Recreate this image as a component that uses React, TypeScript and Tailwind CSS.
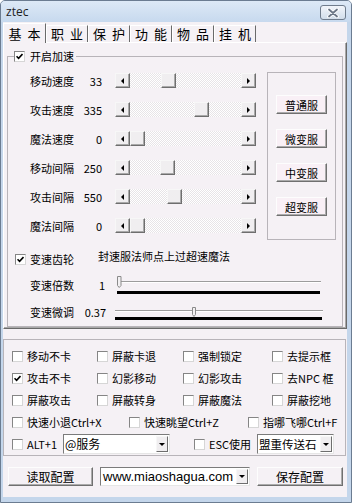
import React from "react";

const tabs = ["基本", "职业", "保护", "功能", "物品", "挂机"];

const speedRows = [
  { label: "移动速度", value: "33", thumb: "ml-[31px]" },
  { label: "攻击速度", value: "335", thumb: "ml-[64px]" },
  { label: "魔法速度", value: "0", thumb: "ml-0" },
  { label: "移动间隔", value: "250", thumb: "ml-[30px]" },
  { label: "攻击间隔", value: "550", thumb: "ml-[37px]" },
  { label: "魔法间隔", value: "0", thumb: "ml-0" },
];

const serverButtons = ["普通服", "微变服", "中变服", "超变服"];

const checkGrid: { label: string; on?: boolean }[][] = [
  [{ label: "移动不卡" }, { label: "屏蔽卡退" }, { label: "强制锁定" }, { label: "去提示框" }],
  [{ label: "攻击不卡", on: true }, { label: "幻影移动" }, { label: "幻影攻击" }, { label: "去NPC 框" }],
  [{ label: "屏蔽攻击" }, { label: "屏蔽转身" }, { label: "屏蔽魔法" }, { label: "屏蔽挖地" }],
];

function Check({ on }: { on?: boolean }) {
  return (
    <span className="flex h-[11px] w-[11px] shrink-0 items-center justify-center border border-[#858585] border-r-[#d6d6d6] border-b-[#d6d6d6] bg-white">
      {on && (
        <svg width="7" height="7" viewBox="0 0 7 7">
          <path d="M0.5 3.2 L2.6 5.4 L6.5 1" fill="none" stroke="#000" strokeWidth="1.6" />
        </svg>
      )}
    </span>
  );
}

function CheckItem({ label, on, className }: { label: string; on?: boolean; className?: string }) {
  return (
    <div className={"flex items-center gap-[4px] " + (className ?? "")}>
      <Check on={on} />
      <span className="whitespace-nowrap text-[11px] leading-[12px]">{label}</span>
    </div>
  );
}

function Arrow({ dir }: { dir: "left" | "right" | "down" }) {
  const d =
    dir === "left" ? "M4 0 L4 6 L1 3 Z" : dir === "right" ? "M1 0 L1 6 L4 3 Z" : "M0 1 L6 1 L3 4 Z";
  return (
    <svg width={dir === "down" ? 6 : 5} height={dir === "down" ? 5 : 6} viewBox={dir === "down" ? "0 0 6 5" : "0 0 5 6"}>
      <path d={d} fill="#000" />
    </svg>
  );
}

function ScrollBtn({ dir }: { dir: "left" | "right" }) {
  return (
    <div className="flex h-[15px] w-[15px] shrink-0 items-center justify-center border border-[#f7f7f7] border-r-[#6e6e6e] border-b-[#6e6e6e] bg-[#f0eef0] shadow-[inset_-1px_-1px_0_#a9a9a9]">
      <Arrow dir={dir} />
    </div>
  );
}

function HScroll({ thumb }: { thumb: string }) {
  return (
    <div className="flex h-[15px] w-[141px]">
      <ScrollBtn dir="left" />
      <div className="flex flex-1 bg-[repeating-conic-gradient(#ffffff_0%_25%,#e7e4e7_0%_50%)] bg-[length:2px_2px]">
        <div className={"h-[15px] w-[15px] border border-[#f7f7f7] border-r-[#6e6e6e] border-b-[#6e6e6e] bg-[#f0eef0] shadow-[inset_-1px_-1px_0_#a9a9a9] " + thumb} />
      </div>
      <ScrollBtn dir="right" />
    </div>
  );
}

function RaisedButton({ children, className }: { children: React.ReactNode; className?: string }) {
  return (
    <div
      className={
        "flex items-center justify-center border border-[#fdfdfd] border-r-[#707070] border-b-[#707070] shadow-[inset_-1px_-1px_0_#ababab] " +
        (className ?? "")
      }
    >
      {children}
    </div>
  );
}

function Select({ text, className, textClass }: { text: string; className: string; textClass: string }) {
  return (
    <div className={"flex items-center border border-[#7b7b7b] border-r-[#e6e6e6] border-b-[#e6e6e6] bg-white p-[1px] " + className}>
      <span className={"min-w-0 flex-1 whitespace-nowrap " + textClass}>{text}</span>
      <div className="flex h-full w-[12px] shrink-0 items-center justify-center border border-[#f7f7f7] border-r-[#6e6e6e] border-b-[#6e6e6e] bg-[#f0eef0]">
        <Arrow dir="down" />
      </div>
    </div>
  );
}

function Trackbar1() {
  return (
    <svg width="206" height="18" viewBox="0 0 206 18" className="shrink-0">
      <rect x="3" y="5" width="201" height="1" fill="#9c9c9c" />
      <rect x="3" y="6" width="201" height="1" fill="#ffffff" />
      <path d="M0.5 0.5 H4 V9.5 L2.2 11.5 L0.5 9.5 Z" fill="#f2f0f2" stroke="#8a8a8a" strokeWidth="1" />
      <rect x="0" y="15" width="203" height="3" fill="#000" />
    </svg>
  );
}

function Trackbar2() {
  return (
    <svg width="208" height="14" viewBox="0 0 208 14" className="shrink-0">
      <rect x="0" y="3" width="208" height="1" fill="#9c9c9c" />
      <rect x="0" y="4" width="208" height="1" fill="#ffffff" />
      <path d="M77.5 0.5 H80.5 V7.5 L79 9.5 L77.5 7.5 Z" fill="#f2f0f2" stroke="#8a8a8a" strokeWidth="1" />
      <rect x="0" y="10" width="207" height="3" fill="#000" />
    </svg>
  );
}

function CloseButton() {
  return (
    <div className="mr-[5px] mt-[4px] flex h-[15px] w-[26px] items-center justify-center rounded-[3px] border border-[#6f7c8c] bg-linear-to-b from-[#f1f5fa] to-[#d2deeb]">
      <svg width="12" height="10" viewBox="0 0 12 10">
        <path d="M2 1.5 L10 8.5 M10 1.5 L2 8.5" stroke="#ffffff" strokeWidth="3.6" strokeLinecap="round" />
        <path d="M2 1.5 L10 8.5 M10 1.5 L2 8.5" stroke="#6a7686" strokeWidth="1.8" strokeLinecap="round" />
      </svg>
    </div>
  );
}

export default function App() {
  return (
    <div className="flex h-[503px] w-[352px] flex-col overflow-hidden rounded-t-[5px] border border-[#6b7c91] bg-[#c4d6eb] font-['Noto_Sans_CJK_SC',sans-serif] text-black">
      {/* title bar */}
      <div className="flex h-[21px] shrink-0 items-start justify-between bg-linear-to-b from-[#dde9f6] to-[#c7d9ee]">
        <span className="ml-[5px] mt-[4px] font-['Open_Sans',sans-serif] text-[12px] leading-[14px] text-[#1e1e1e]">ztec</span>
        <CloseButton />
      </div>

      {/* client area */}
      <div className="mb-[5px] ml-[2px] mr-[4px] flex flex-1 flex-col bg-[#f5f1f5]">
        {/* tabs */}
        <div className="flex h-[20px] items-end">
          {tabs.map((t, i) =>
            i === 0 ? (
              <div
                key={t}
                className="relative z-10 -mb-px flex h-[20px] w-[43px] items-center justify-center gap-[6px] border border-b-0 border-[#ffffff] border-r-[#6a6a6a] bg-[#f5f1f5] text-[13px] leading-[14px]"
              >
                <span>{t[0]}</span>
                <span>{t[1]}</span>
              </div>
            ) : (
              <div
                key={t}
                className="flex h-[17px] w-[42px] items-center justify-center gap-[6px] border border-b-0 border-[#ffffff] border-r-[#6a6a6a] text-[13px] leading-[14px]"
              >
                <span>{t[0]}</span>
                <span>{t[1]}</span>
              </div>
            )
          )}
        </div>

        {/* tab panel */}
        <div className="h-[287px] border border-[#ffffff] border-r-[#6a6a6a] border-b-[#6a6a6a] shadow-[inset_-1px_-1px_0_#a8a8a8]">
          <fieldset className="mx-[3px] mt-[7px] h-[277px] border border-[#b8b4b9]">
            <legend className="ml-[6px] flex h-[12px] items-center gap-[5px] pr-[2px] text-[11px] leading-[12px]">
              <Check on />
              <span>开启加速</span>
            </legend>

            <div className="mt-[10px] flex">
              <div className="flex flex-col gap-[14px] pl-[22px] pt-[1px]">
                {speedRows.map((r) => (
                  <div key={r.label} className="flex h-[15px] items-center">
                    <span className="w-[48px] text-[11px] leading-[12px]">{r.label}</span>
                    <span className="w-[24px] text-right text-[11px] leading-[12px]">{r.value}</span>
                    <div className="ml-[13px]">
                      <HScroll thumb={r.thumb} />
                    </div>
                  </div>
                ))}
              </div>

              <div className="ml-[11px] flex h-[168px] w-[69px] flex-col items-center gap-[15px] border border-[#b8b4b9] pt-[22px]">
                {serverButtons.map((b) => (
                  <RaisedButton key={b} className="h-[19px] w-[51px] bg-[#f9f0f6] text-[11px] leading-[12px]">
                    {b}
                  </RaisedButton>
                ))}
              </div>
            </div>

            <div className="mt-[13px] flex h-[12px] items-center pl-[7px]">
              <Check on />
              <span className="ml-[4px] w-[44px] text-[11px] leading-[12px]">变速齿轮</span>
              <span className="-mt-[6px] ml-[24px] text-[11px] leading-[12px]">封速服法师点上过超速魔法</span>
            </div>

            <div className="mt-[11px] flex h-[18px] items-center pl-[22px]">
              <span className="w-[44px] text-[11px] leading-[12px]">变速倍数</span>
              <span className="w-[31px] text-right text-[11px] leading-[12px]">1</span>
              <div className="ml-[12px]">
                <Trackbar1 />
              </div>
            </div>

            <div className="mt-[13px] flex h-[14px] items-start pl-[22px]">
              <span className="-mt-[1px] w-[44px] text-[11px] leading-[12px]">变速微调</span>
              <span className="-mt-[1px] w-[32px] text-right text-[11px] leading-[12px]">0.37</span>
              <div className="ml-[9px]">
                <Trackbar2 />
              </div>
            </div>
          </fieldset>
        </div>

        {/* options box */}
        <div className="mr-[1px] mt-[10px] h-[117px] border border-[#b8b4b9] pl-[8px] pt-[5px]">
          {checkGrid.map((row, i) => (
            <div key={i} className="grid h-[22px] grid-cols-[85px_86px_89px_1fr] items-center">
              {row.map((c) => (
                <CheckItem key={c.label} label={c.label} on={c.on} />
              ))}
            </div>
          ))}
          <div className="flex h-[22px] items-center">
            <CheckItem label="快速小退Ctrl+X" className="w-[117px]" />
            <CheckItem label="快速眺望Ctrl+Z" className="w-[119px]" />
            <CheckItem label="指哪飞哪Ctrl+F" />
          </div>
          <div className="flex h-[22px] items-center">
            <CheckItem label="ALT+1" className="w-[51px]" />
            <Select text="@服务" className="h-[20px] w-[107px]" textClass="text-[12px] leading-[14px]" />
            <CheckItem label="ESC使用" className="ml-[24px] w-[63px]" />
            <Select text="盟重传送石" className="h-[20px] w-[77px]" textClass="text-[11.5px] leading-[14px]" />
          </div>
        </div>

        {/* bottom buttons */}
        <div className="mt-[11px] flex h-[19px]">
          <RaisedButton className="ml-[5px] w-[85px] text-[12px] leading-[14px]">读取配置</RaisedButton>
          <Select
            text="www.miaoshagua.com"
            className="ml-[7px] w-[150px]"
            textClass="pl-[1px] font-['Liberation_Sans',sans-serif] text-[13px] leading-[15px]"
          />
          <RaisedButton className="ml-[7px] w-[86px] text-[12px] leading-[14px]">保存配置</RaisedButton>
        </div>
      </div>
    </div>
  );
}
